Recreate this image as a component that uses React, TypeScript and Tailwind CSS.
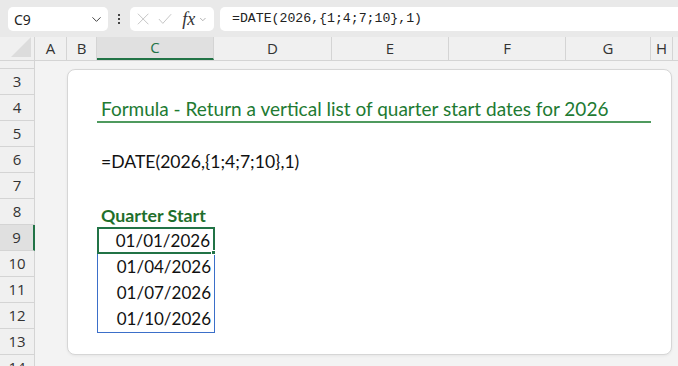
import { ChevronDown } from "lucide-react";

const cols = [
  { id: "A", w: 32 },
  { id: "B", w: 30 },
  { id: "C", w: 117 },
  { id: "D", w: 118 },
  { id: "E", w: 117 },
  { id: "F", w: 117 },
  { id: "G", w: 85 },
  { id: "H", w: 22 },
];

const rows = [3, 4, 5, 6, 7, 8, 9, 10, 11, 12, 13, 14];
const dates = ["01/01/2026", "01/04/2026", "01/07/2026", "01/10/2026"];

function FormulaBar() {
  return (
    <div className="flex h-[37px] items-center gap-[6px] bg-[#e9e9e9] pl-[8px] pt-[1px]">
      <div className="flex h-[24px] w-[100px] items-center justify-between rounded-[5px] bg-white pl-[6px] pr-[4px] text-[14px] text-[#222]">
        <span>C9</span>
        <ChevronDown size={15} strokeWidth={1.6} className="text-[#444]" />
      </div>
      <div className="flex w-[10px] flex-col items-center gap-[2px]">
        <span className="h-[2px] w-[2px] bg-[#444]" />
        <span className="h-[2px] w-[2px] bg-[#444]" />
        <span className="h-[2px] w-[2px] bg-[#444]" />
      </div>
      <div className="flex h-[24px] w-[84px] items-center gap-[3px] rounded-[5px] bg-white px-[6px]">
        <svg width="14" height="14" viewBox="0 0 14 14" className="ml-[1px]">
          <path d="M1 1 L13 13 M13 1 L1 13" stroke="#c4c4c4" strokeWidth="1.1" fill="none" />
        </svg>
        <svg width="16" height="14" viewBox="0 0 16 14" className="ml-[6px]">
          <path d="M1 7 L5.5 12 L15 1.5" stroke="#c4c4c4" strokeWidth="1.1" fill="none" />
        </svg>
        <span className="ml-[7px] font-['Liberation_Serif',serif] text-[18px] italic leading-none text-[#333]">fx</span>
        <ChevronDown size={11} strokeWidth={1.4} className="text-[#777]" />
      </div>
      <div className="flex h-[24px] flex-1 items-center rounded-l-[5px] bg-white pl-[12px] font-['Liberation_Mono',monospace] text-[13.2px] text-[#222]">
        =DATE(2026,{"{"}1;4;7;10{"}"},1)
      </div>
    </div>
  );
}

function ColumnHeaders() {
  return (
    <div className="flex h-[24px] border-b border-[#d4d4d4] bg-[#f0f0f0] font-['Open_Sans',sans-serif] text-[15px] text-[#333]">
      <div className="relative w-[35px] border-r border-[#d4d4d4]">
        <svg width="20" height="20" viewBox="0 0 20 20" className="absolute bottom-[3px] right-[3px]">
          <path d="M20 0 L20 20 L0 20 Z" fill="#dcdcdc" />
        </svg>
      </div>
      {cols.map((c) =>
        c.id === "C" ? (
          <div
            key={c.id}
            style={{ width: c.w }}
            className="flex items-center justify-center border-b-2 border-r border-b-[#217346] border-r-[#d4d4d4] bg-[#e0e0e0] text-[#217346]"
          >
            {c.id}
          </div>
        ) : (
          <div
            key={c.id}
            style={{ width: c.w }}
            className="flex items-center justify-center border-r border-[#d4d4d4]"
          >
            {c.id}
          </div>
        )
      )}
      <div className="flex-1" />
    </div>
  );
}

function RowHeaders() {
  return (
    <div className="flex w-[35px] flex-col border-r border-[#d4d4d4] bg-[#f0f0f0] font-['Open_Sans',sans-serif] text-[15px] text-[#333]">
      <div className="h-[8px] shrink-0 border-b border-[#d4d4d4]" />
      {rows.map((r) =>
        r === 9 ? (
          <div
            key={r}
            className="-mr-px flex h-[26px] shrink-0 items-center justify-center border-b border-r-2 border-b-[#d4d4d4] border-r-[#217346] bg-[#e0e0e0]"
          >
            {r}
          </div>
        ) : (
          <div key={r} className="flex h-[26px] shrink-0 items-center justify-center border-b border-[#d4d4d4]">
            {r}
          </div>
        )
      )}
    </div>
  );
}

function Card() {
  return (
    <div className="ml-[32px] mt-[8px] h-[286px] w-[605px] rounded-[8px] border border-[#d6d6d6] bg-white font-['Lato',sans-serif] shadow-[0_1px_3px_rgba(0,0,0,0.06)]">
      <div className="h-[26px]" />
      <div className="flex h-[27px]">
        <div className="w-[29px]" />
        <div className="flex w-[554px] items-end border-b-2 border-[#4f9a5e] pb-[3px] pl-[4px] text-[19px] leading-none text-[#217a32]">
          Formula - Return a vertical list of quarter start dates for 2026
        </div>
      </div>
      <div className="h-[26px]" />
      <div className="flex h-[26px] items-center">
        <div className="w-[29px]" />
        <div className="pl-[4px] text-[17.6px] text-[#111]">=DATE(2026,{"{"}1;4;7;10{"}"},1)</div>
      </div>
      <div className="h-[26px]" />
      <div className="flex h-[26px] items-end">
        <div className="w-[29px]" />
        <div className="pb-[1px] pl-[4px] text-[17.8px] leading-[22px] font-bold text-[#1f6f2c]">Quarter Start</div>
      </div>
      <div className="flex">
        <div className="w-[29px]" />
        <div className="relative w-[118px] border border-t-0 border-[#3b6fc9]">
          {dates.map((d, i) =>
            i === 0 ? (
              <div
                key={d}
                className="relative -mx-px flex h-[27px] items-center justify-end border-2 border-[#217346] pr-[3px] text-[17px] text-[#111]"
              >
                {d}
                <span className="absolute -bottom-[3px] -right-[3px] h-[5px] w-[5px] border border-white bg-[#217346]" />
              </div>
            ) : (
              <div key={d} className="flex h-[26px] items-center justify-end pr-[3px] text-[17px] text-[#111]">
                {d}
              </div>
            )
          )}
        </div>
      </div>
    </div>
  );
}

export default function App() {
  return (
    <div className="h-[366px] w-[678px] overflow-hidden bg-[#f3f3f3]">
      <FormulaBar />
      <ColumnHeaders />
      <div className="flex">
        <RowHeaders />
        <div className="flex-1">
          <Card />
        </div>
      </div>
    </div>
  );
}
